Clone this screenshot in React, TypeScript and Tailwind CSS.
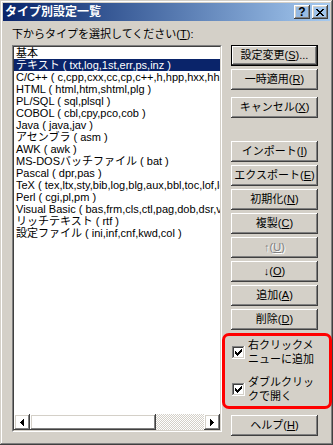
import type { ReactNode } from 'react'

// classic 3D edges
const raised =
  'shadow-[inset_-1px_-1px_#404040,inset_1px_1px_#ffffff,inset_-2px_-2px_#808080,inset_2px_2px_#d4d0c8]'

const types = [
  '基本',
  'テキスト ( txt,log,1st,err,ps,inz )',
  'C/C++ ( c,cpp,cxx,cc,cp,c++,h,hpp,hxx,hh,inl )',
  'HTML ( html,htm,shtml,plg )',
  'PL/SQL ( sql,plsql )',
  'COBOL ( cbl,cpy,pco,cob )',
  'Java ( java,jav )',
  'アセンブラ ( asm )',
  'AWK ( awk )',
  'MS-DOSバッチファイル ( bat )',
  'Pascal ( dpr,pas )',
  'TeX ( tex,ltx,sty,bib,log,blg,aux,bbl,toc,lof,lot,idx )',
  'Perl ( cgi,pl,pm )',
  'Visual Basic ( bas,frm,cls,ctl,pag,dob,dsr,vb )',
  'リッチテキスト ( rtf )',
  '設定ファイル ( ini,inf,cnf,kwd,col )',
]

function Btn({
  label,
  keyChar,
  suffix = '',
  isDefault,
  disabled,
  className = '',
}: {
  label: string
  keyChar: string
  suffix?: string
  isDefault?: boolean
  disabled?: boolean
  className?: string
}) {
  return (
    <div className={`h-[21px] w-[87px] shrink-0 ${isDefault ? 'border border-black' : ''} ${className}`}>
      <div
        className={`h-full w-full flex items-center justify-center text-[11px] leading-none ${raised} ${
          disabled ? 'text-[#808080] [text-shadow:1px_1px_0_#ffffff]' : 'text-black'
        }`}
      >
        {label}(<span className="underline underline-offset-1">{keyChar}</span>){suffix}
      </div>
    </div>
  )
}

function Check() {
  const cols: [number, number][] = [
    [3, 5], [4, 6], [5, 7], [6, 6], [7, 5], [8, 4], [9, 3],
  ]
  return (
    <svg width="13" height="13" viewBox="0 0 13 13" shapeRendering="crispEdges" className="shrink-0">
      <rect x="0" y="0" width="13" height="13" fill="#ffffff" />
      <rect x="0" y="0" width="12" height="12" fill="#808080" />
      <rect x="1" y="1" width="11" height="11" fill="#d4d0c8" />
      <rect x="1" y="1" width="10" height="10" fill="#404040" />
      <rect x="2" y="2" width="9" height="9" fill="#ffffff" />
      {cols.map(([x, y]) => (
        <rect key={x} x={x} y={y} width="1" height="3" fill="#000000" />
      ))}
    </svg>
  )
}

function Arrow({ dir }: { dir: 'left' | 'right' }) {
  return (
    <div className={`h-[16px] w-[16px] shrink-0 flex items-center justify-center ${raised}`}>
      <svg width="4" height="7" viewBox="0 0 4 7" shapeRendering="crispEdges">
        {dir === 'left' ? (
          <polygon points="4,0 4,7 0,3.5" fill="#000000" />
        ) : (
          <polygon points="0,0 0,7 4,3.5" fill="#000000" />
        )}
      </svg>
    </div>
  )
}

function CheckItem({ children }: { children: ReactNode }) {
  return (
    <div className="flex items-center h-[28px] pl-[7px] gap-[3px]">
      <Check />
      <div className="w-[70px] text-[11px] leading-[14px] text-black">{children}</div>
    </div>
  )
}

export default function App() {
  return (
    <div
      className={`w-[333px] h-[445px] bg-[#d4d0c8] p-[3px] flex flex-col font-['Liberation_Sans','Noto_Sans_CJK_JP',sans-serif] shadow-[inset_-1px_-1px_#404040,inset_1px_1px_#d4d0c8,inset_-2px_-2px_#808080,inset_2px_2px_#ffffff]`}
    >
      {/* title bar */}
      <div className="h-[18px] shrink-0 flex items-start bg-linear-to-r from-[#0a246a] to-[#a6caf0]">
        <div className="flex-1 pl-[2px] h-full flex items-center text-[12px] font-bold text-white leading-none">
          タイプ別設定一覧
        </div>
        <div className="flex gap-[2px] mt-[2px] mr-[2px]">
          <div className={`h-[14px] w-[16px] flex items-center justify-center text-[12px] font-bold leading-none text-black ${raised}`}>
            ?
          </div>
          <div className={`h-[14px] w-[16px] flex items-center justify-center ${raised}`}>
            <svg width="8" height="7" viewBox="0 0 8 7" shapeRendering="crispEdges">
              <path d="M0 0h2v1h-2zM6 0h2v1h-2zM1 1h2v1h-2zM5 1h2v1h-2zM2 2h4v1h-4zM3 3h2v1h-2zM2 4h4v1h-4zM1 5h2v1h-2zM5 5h2v1h-2zM0 6h2v1h-2zM6 6h2v1h-2z" fill="#000000" />
            </svg>
          </div>
        </div>
      </div>

      {/* body */}
      <div className="flex pl-[9px] pt-[6px] gap-[9px]">
        <div className="w-[210px] flex flex-col">
          <div className="h-[14px] mb-[4px] text-[11px] leading-[14px] text-black whitespace-nowrap">
            下からタイプを選択してください(<span className="underline underline-offset-1">T</span>):
          </div>
          <div className="h-[387px] border border-t-[#808080] border-l-[#808080] border-b-white border-r-white">
            <div className="h-full border border-t-[#404040] border-l-[#404040] border-b-[#d4d0c8] border-r-[#d4d0c8] bg-white flex flex-col">
              <div className="flex-1 overflow-hidden">
                {types.map((t, i) => (
                  <div
                    key={t}
                    className={`h-[12px] pl-[2px] text-[11px] leading-[12px] whitespace-nowrap overflow-hidden ${
                      i === 1 ? 'bg-[#0a246a] text-white' : 'text-black'
                    }`}
                  >
                    {t}
                  </div>
                ))}
              </div>
              <div className="h-[16px] flex shrink-0">
                <Arrow dir="left" />
                <div className={`h-[16px] w-[126px] ${raised}`} />
                <div className="h-[16px] flex-1 bg-[repeating-conic-gradient(#d4d0c8_0%_25%,#ffffff_0%_50%)] bg-size-[2px_2px]" />
                <Arrow dir="right" />
              </div>
            </div>
          </div>
        </div>

        <div className="w-[87px] flex flex-col pt-[18px]">
          <Btn label="設定変更" keyChar="S" suffix="..." isDefault />
          <Btn label="一時適用" keyChar="R" className="mt-[3px]" />
          <Btn label="キャンセル" keyChar="X" className="mt-[7px]" />
          <Btn label="インポート" keyChar="I" className="mt-[23px]" />
          <Btn label="エクスポート" keyChar="E" className="mt-[3px]" />
          <Btn label="初期化" keyChar="N" className="mt-[3px]" />
          <Btn label="複製" keyChar="C" className="mt-[3px]" />
          <Btn label="↑" keyChar="U" disabled className="mt-[3px]" />
          <Btn label="↓" keyChar="O" className="mt-[3px]" />
          <Btn label="追加" keyChar="A" className="mt-[3px]" />
          <Btn label="削除" keyChar="D" className="mt-[3px]" />

          <div className="mt-[3px] -ml-[9px] -mr-[14px] h-[76px] border-[3px] border-[#ff0000] rounded-[7px] pt-[2px] flex flex-col gap-[9px]">
            <CheckItem>
              右クリックメ
              <br />
              ニューに追加
            </CheckItem>
            <CheckItem>
              ダブルクリッ
              <br />
              クで開く
            </CheckItem>
          </div>

          <Btn label="ヘルプ" keyChar="H" className="mt-[6px]" />
        </div>
      </div>
    </div>
  )
}
